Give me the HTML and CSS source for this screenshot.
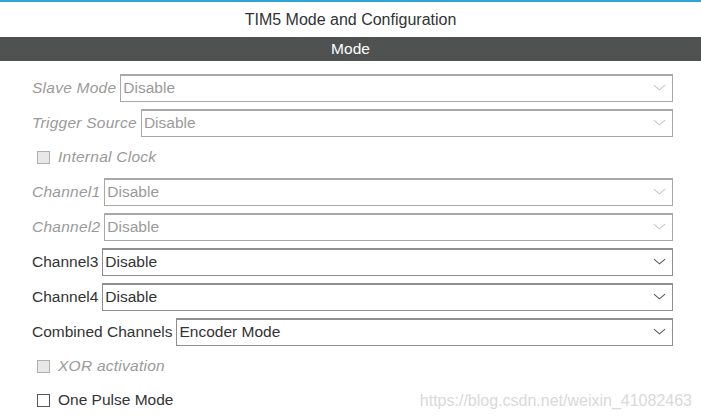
FILE: index.html
```html
<!DOCTYPE html>
<html>
<head>
<meta charset="utf-8">
<link rel="stylesheet" href="styles.css">
</head>
<body>
<div class="page">
  <div class="title">TIM5 Mode and Configuration</div>
  <div class="bar">Mode</div>
  <div class="form">
    <div class="row disabled"><span class="label">Slave Mode</span><div class="select"><span class="value">Disable</span><svg class="chev" viewBox="0 0 14 8"><path d="M1 1 L7 6 L13 1"/></svg></div></div>
    <div class="row disabled"><span class="label">Trigger Source</span><div class="select"><span class="value">Disable</span><svg class="chev" viewBox="0 0 14 8"><path d="M1 1 L7 6 L13 1"/></svg></div></div>
    <div class="row check disabled"><span class="box"></span><span class="label">Internal Clock</span></div>
    <div class="row disabled"><span class="label">Channel1</span><div class="select"><span class="value">Disable</span><svg class="chev" viewBox="0 0 14 8"><path d="M1 1 L7 6 L13 1"/></svg></div></div>
    <div class="row disabled"><span class="label">Channel2</span><div class="select"><span class="value">Disable</span><svg class="chev" viewBox="0 0 14 8"><path d="M1 1 L7 6 L13 1"/></svg></div></div>
    <div class="row"><span class="label">Channel3</span><div class="select"><span class="value">Disable</span><svg class="chev" viewBox="0 0 14 8"><path d="M1 1 L7 6 L13 1"/></svg></div></div>
    <div class="row"><span class="label">Channel4</span><div class="select"><span class="value">Disable</span><svg class="chev" viewBox="0 0 14 8"><path d="M1 1 L7 6 L13 1"/></svg></div></div>
    <div class="row"><span class="label">Combined Channels</span><div class="select"><span class="value">Encoder Mode</span><svg class="chev" viewBox="0 0 14 8"><path d="M1 1 L7 6 L13 1"/></svg></div></div>
    <div class="row check disabled"><span class="box"></span><span class="label">XOR activation</span></div>
    <div class="row check"><span class="box"></span><span class="label">One Pulse Mode</span></div>
  </div>
  <div class="watermark">https://blog.csdn.net/weixin_41082463</div>
</div>
</body>
</html>
```

FILE: styles.css
```css
html, body {
  margin: 0;
  padding: 0;
  background: #ffffff;
}
.page {
  position: relative;
  width: 701px;
  height: 420px;
  overflow: hidden;
  font-family: "Liberation Sans", Arial, sans-serif;
  color: #333333;
  border-top: 2px solid #2fa4dc;
  box-sizing: border-box;
}
.title {
  height: 35px;
  line-height: 35px;
  text-align: center;
  font-size: 16px;
  color: #333333;
}
.bar {
  height: 24px;
  line-height: 24px;
  background: #505251;
  color: #ffffff;
  text-align: center;
  font-size: 15.5px;
}
.form {
  padding: 9px 28px 0 32px;
}
.row {
  height: 35px;
  display: flex;
  align-items: center;
  font-size: 15.5px;
}
.row.check {
  height: 34px;
}
.label {
  white-space: nowrap;
  margin-right: 4px;
  color: #333333;
}
.disabled .label {
  font-style: italic;
  color: #9a9a9a;
  letter-spacing: 0.25px;
}
.select {
  flex: 1;
  height: 28px;
  box-sizing: border-box;
  border: 1px solid #8e8e8e;
  border-top-width: 2px;
  display: flex;
  align-items: center;
  padding: 0 6px 0 2px;
  background: #ffffff;
}
.disabled .select {
  border-color: #a8a8a8;
}
.value {
  flex: 1;
  color: #333333;
}
.disabled .value {
  color: #9a9a9a;
}
.chev {
  width: 13px;
  height: 8px;
  fill: none;
  stroke: #555555;
  stroke-width: 1.1;
}
.disabled .chev {
  stroke: #c4c4c4;
}
.check {
  padding-left: 5px;
}
.box {
  width: 13px;
  height: 13px;
  box-sizing: border-box;
  border: 1px solid #555555;
  background: #ffffff;
  margin-right: 8px;
}
.disabled .box {
  border-color: #b0b0b0;
  background: #e8e8e8;
}
.watermark {
  position: absolute;
  right: 9px;
  bottom: 10px;
  font-size: 16px;
  color: #d9d9d9;
}
```
